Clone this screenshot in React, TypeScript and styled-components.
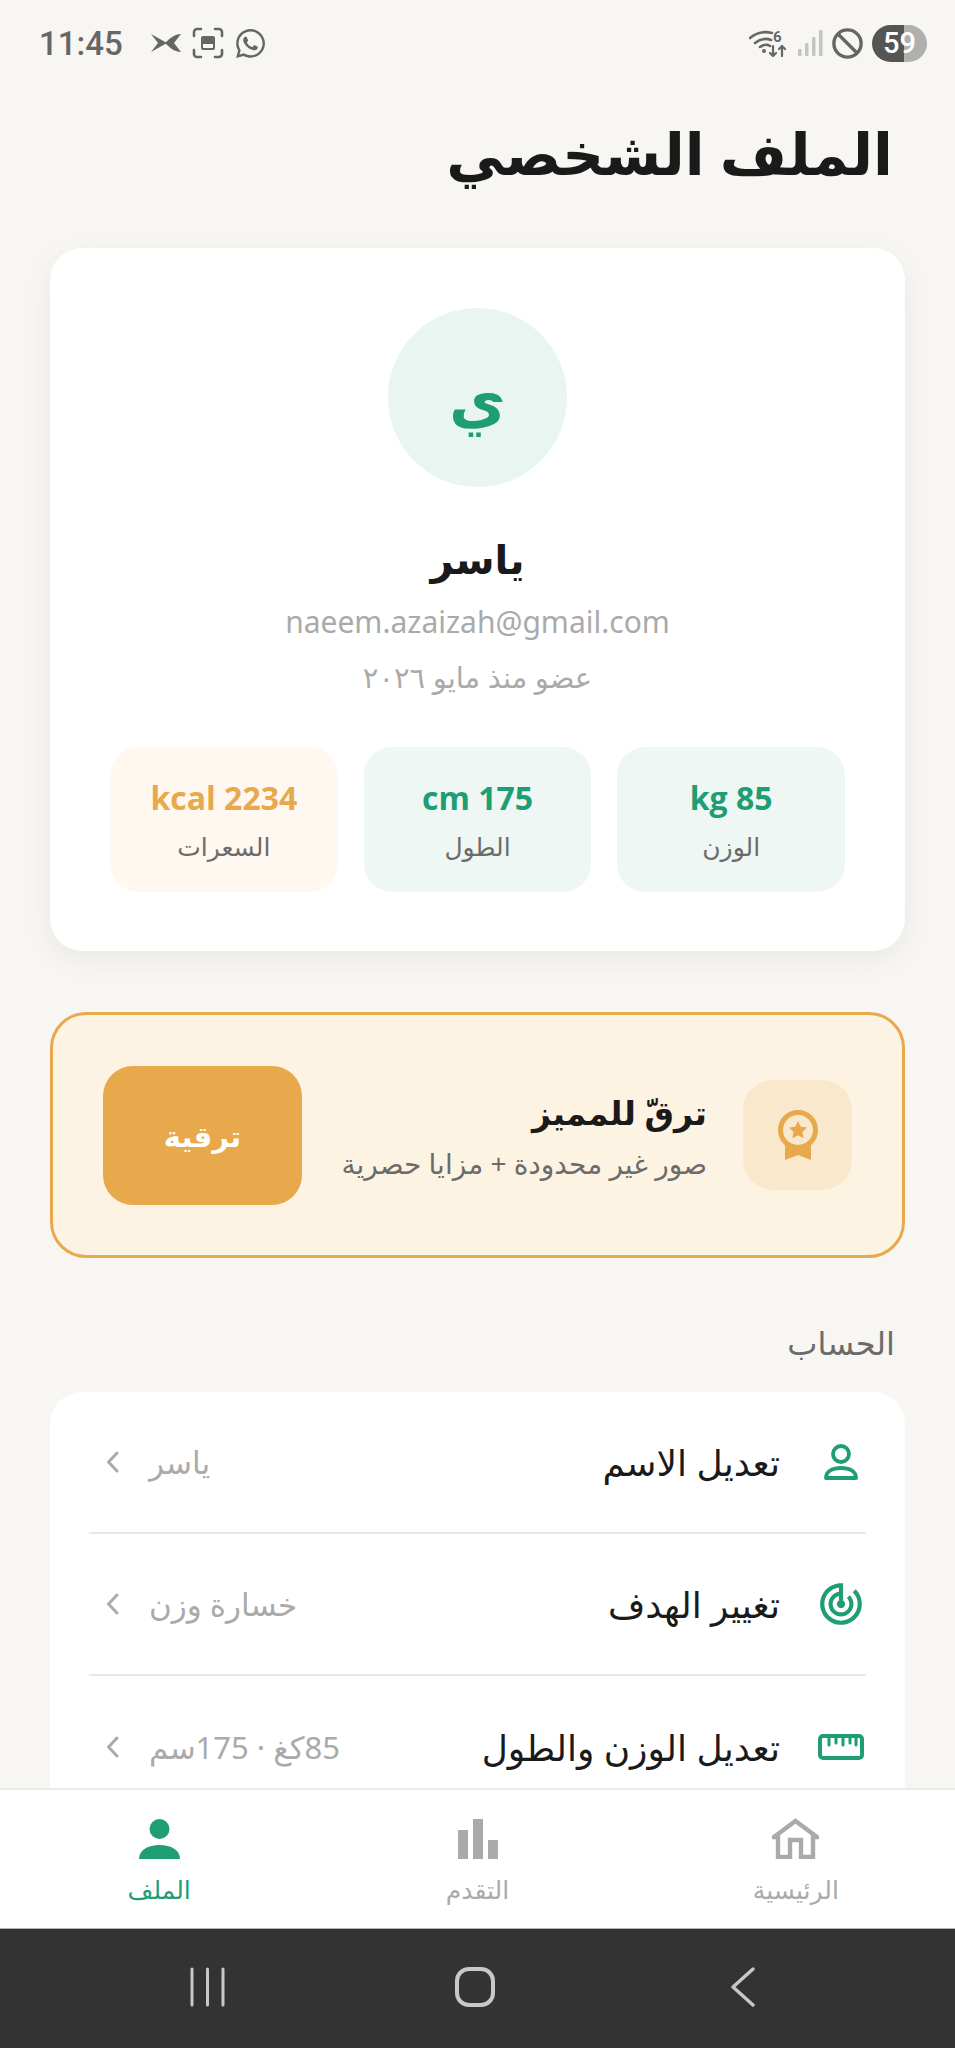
import React from 'react'
import styled, { createGlobalStyle } from 'styled-components'
import { FaWhatsapp } from 'react-icons/fa'
import { MdTrackChanges } from 'react-icons/md'

const GREEN = '#1f9d74'
const ORANGE = '#e8a84c'
const INK = '#1a1a1a'
const MUTED = '#aaaaaa'
const BODY = '#6b6b6b'

const GlobalStyle = createGlobalStyle`
  html, body {
    margin: 0;
    padding: 0;
    background: #f7f6f2;
  }
  * {
    box-sizing: border-box;
  }
  body {
    font-family: "Noto Sans", "DejaVu Sans", sans-serif;
  }
`

const Phone = styled.div`
  width: 955px;
  height: 2048px;
  display: flex;
  flex-direction: column;
  overflow: hidden;
  background: #f7f6f2;
`

const StatusBar = styled.div`
  direction: ltr;
  flex: none;
  height: 86px;
  padding: 0 28px 0 39px;
  display: flex;
  align-items: center;
  justify-content: space-between;
  color: #666;
`

const StatusGroup = styled.div`
  display: flex;
  align-items: center;
  gap: ${({ $gap }: { $gap: number }) => $gap}px;
`

const Clock = styled.span`
  font-family: Roboto, sans-serif;
  font-weight: 500;
  font-size: 33px;
  margin-right: 17px;
`

const Battery = styled.div`
  width: 55px;
  height: 37px;
  border-radius: 19px;
  background: linear-gradient(90deg, #555 58%, #b0b0ae 58%);
  color: #fff;
  font-family: Roboto, sans-serif;
  font-weight: 500;
  font-size: 29px;
  line-height: 37px;
  text-align: center;
`

const Scroll = styled.main`
  flex: 1;
  min-height: 0;
  overflow: hidden;
  padding: 0 50px;
  direction: rtl;
`

const Title = styled.h1`
  margin: 0;
  height: 162px;
  padding: 0 12px 0 0;
  font-size: 58px;
  line-height: 134px;
  font-weight: 700;
  color: ${INK};
`

const ProfileCard = styled.section`
  height: 703px;
  padding: 60px 60px 0;
  background: #fff;
  border-radius: 32px;
  box-shadow: 0 8px 28px rgba(0, 0, 0, 0.06);
  display: flex;
  flex-direction: column;
  align-items: center;
`

const Avatar = styled.div`
  width: 179px;
  height: 179px;
  border-radius: 50%;
  background: #e8f5f0;
  color: ${GREEN};
  font-size: 62px;
  font-weight: 700;
  display: flex;
  align-items: center;
  justify-content: center;
`

const Name = styled.div`
  margin-top: 42px;
  font-size: 40px;
  line-height: 60px;
  font-weight: 700;
  color: ${INK};
`

const Email = styled.div`
  margin-top: 13px;
  font-size: 30px;
  line-height: 40px;
  color: ${MUTED};
`

const Since = styled.div`
  margin-top: 15px;
  font-size: 29px;
  line-height: 40px;
  color: ${MUTED};
`

const Stats = styled.div`
  margin-top: 50px;
  width: 100%;
  display: grid;
  grid-template-columns: repeat(3, 1fr);
  gap: 26px;
`

const Stat = styled.div<{ $warm?: boolean }>`
  height: 145px;
  border-radius: 28px;
  background: ${({ $warm }) => ($warm ? '#fef8f0' : '#eef7f3')};
  display: flex;
  flex-direction: column;
  align-items: center;
  padding-top: 29px;
`

const StatValue = styled.div<{ $warm?: boolean }>`
  font-family: "Open Sans", sans-serif;
  font-size: 32px;
  line-height: 44px;
  font-weight: 700;
  color: ${({ $warm }) => ($warm ? ORANGE : GREEN)};
`

const StatLabel = styled.div`
  margin-top: 8px;
  font-size: 25px;
  line-height: 36px;
  color: ${BODY};
`

const PremiumCard = styled.section`
  margin-top: 61px;
  height: 246px;
  padding: 0 50px;
  background: #fdf3e3;
  border: 3px solid ${ORANGE};
  border-radius: 36px;
  display: flex;
  align-items: center;
`

const MedalBox = styled.div`
  flex: none;
  width: 109px;
  height: 110px;
  border-radius: 30px;
  background: #fae8cc;
  display: flex;
  align-items: center;
  justify-content: center;
`

const PremiumText = styled.div`
  margin-right: 36px;
  flex: 1;
`

const PremiumTitle = styled.div`
  font-size: 33px;
  line-height: 50px;
  font-weight: 700;
  color: ${INK};
`

const PremiumSub = styled.div`
  margin-top: 6px;
  font-size: 28px;
  line-height: 38px;
  color: ${BODY};
`

const UpgradeButton = styled.button`
  flex: none;
  width: 199px;
  height: 139px;
  border: 0;
  border-radius: 30px;
  background: ${ORANGE};
  color: #fff;
  font-family: inherit;
  font-size: 29px;
  font-weight: 700;
`

const SectionTitle = styled.h2`
  margin: 63px 0 27px;
  padding-right: 10px;
  font-size: 32px;
  line-height: 44px;
  font-weight: 400;
  color: ${BODY};
`

const MenuCard = styled.section`
  padding: 0 39px;
  background: #fff;
  border-radius: 32px;
`

const MenuRow = styled.div`
  height: 142px;
  padding: 0 0 0 17px;
  display: flex;
  align-items: center;
  border-bottom: 2px solid #e9e8e1;

  &:last-child {
    border-bottom: 0;
  }
`

const MenuIcon = styled.div`
  flex: none;
  width: 50px;
  display: flex;
  justify-content: center;
  color: ${GREEN};
`

const MenuLabel = styled.div`
  margin-right: 36px;
  font-size: 36px;
  color: ${INK};
`

const MenuValue = styled.div`
  margin-right: auto;
  font-size: 31px;
  color: ${MUTED};
`

const Chevron = styled.svg`
  flex: none;
  margin-right: 30px;
  width: 13px;
  height: 22px;
`

const TabBar = styled.nav`
  flex: none;
  height: 141px;
  direction: rtl;
  background: #fff;
  border-top: 2px solid #ebeae6;
  border-bottom: 1px solid #b5b5b5;
  display: grid;
  grid-template-columns: repeat(3, 1fr);
`

const Tab = styled.div<{ $active?: boolean }>`
  padding-top: 28px;
  display: flex;
  flex-direction: column;
  align-items: center;
  color: ${({ $active }) => ($active ? GREEN : MUTED)};
`

const TabLabel = styled.div`
  margin-top: 14px;
  font-size: 25px;
  line-height: 32px;
`

const SystemNav = styled.div`
  flex: none;
  height: 119px;
  background: #333;
  color: #c8c8c8;
  display: grid;
  grid-template-columns: 190px 35px 230px 40px 236px 24px;
  padding-top: 38px;
`

const Slot = styled.div`
  grid-column: ${({ $col }: { $col: number }) => $col};
`

function ScissorsIcon() {
  return (
    <svg width="32" height="20" viewBox="0 0 32 20" fill="currentColor">
      <path d="M1 1l16 9-16 9 7-9z" />
      <path d="M31 1c-6 0-11 4-16 9 5 5 10 9 16 9l-7-9z" />
    </svg>
  )
}

function CaptureIcon() {
  return (
    <svg width="32" height="32" viewBox="0 0 32 32" fill="none" stroke="currentColor" strokeWidth="2.6" strokeLinecap="round">
      <path d="M2 9V5a3 3 0 0 1 3-3h4M23 2h4a3 3 0 0 1 3 3v4M30 23v4a3 3 0 0 1-3 3h-4M9 30H5a3 3 0 0 1-3-3v-4" />
      <rect x="9" y="9" width="14" height="14" rx="2" fill="currentColor" stroke="none" />
      <rect x="11" y="17" width="10" height="4" fill="#f7f6f2" stroke="none" />
    </svg>
  )
}

function WifiIcon() {
  return (
    <svg width="40" height="28" viewBox="0 0 40 28" fill="none" stroke="currentColor" strokeLinecap="round">
      <path d="M1 9c6-5 14-7 22-5M6 14c5-4 11-5 16-3M11 18c3-2 7-3 10-1" strokeWidth="2.6" />
      <circle cx="15" cy="22" r="2" fill="currentColor" stroke="none" />
      <text x="24" y="13" fontFamily="Roboto, sans-serif" fontSize="15" fontWeight="700" fill="currentColor" stroke="none">6</text>
      <path d="M24 17v10M21 24l3 3 3-3M33 27V17M30 20l3-3 3 3" strokeWidth="2.2" />
    </svg>
  )
}

function SignalIcon() {
  return (
    <svg width="25" height="26" viewBox="0 0 25 26" fill="#c4c4c0">
      <rect x="0" y="19" width="3.5" height="7" rx="1" />
      <rect x="7" y="13" width="3.5" height="13" rx="1" />
      <rect x="14" y="7" width="3.5" height="19" rx="1" />
      <rect x="21" y="0" width="3.5" height="26" rx="1" />
    </svg>
  )
}

function BlockIcon() {
  return (
    <svg width="31" height="31" viewBox="0 0 31 31" fill="none" stroke="currentColor" strokeWidth="3.4">
      <circle cx="15.5" cy="15.5" r="13.6" />
      <path d="M6 6l19 19" />
    </svg>
  )
}

function MedalIcon() {
  return (
    <svg width="42" height="50" viewBox="0 0 42 50">
      <path d="M8 30v20l13-5 13 5V30z" fill={ORANGE} />
      <circle cx="21" cy="20" r="17.5" fill="#fae8cc" stroke={ORANGE} strokeWidth="5" />
      <path d="M21 11l2.8 5.8 6.2.8-4.5 4.3 1.1 6.3-5.6-3-5.6 3 1.1-6.3-4.5-4.3 6.2-.8z" fill={ORANGE} />
    </svg>
  )
}

function PersonOutlineIcon() {
  return (
    <svg width="36" height="36" viewBox="0 0 36 36" fill="none" stroke="currentColor" strokeWidth="3.8" strokeLinejoin="round">
      <circle cx="18" cy="10" r="8" />
      <path d="M3 34c0-7 7-10 15-10s15 3 15 10z" />
    </svg>
  )
}

function RulerIcon() {
  return (
    <svg width="46" height="26" viewBox="0 0 46 26" fill="none" stroke="currentColor" strokeWidth="4" strokeLinecap="round">
      <rect x="2" y="2" width="42" height="22" rx="3" />
      <path d="M11 3v8M18 3v6M25 3v8M32 3v6M38 3v8" strokeWidth="3" />
    </svg>
  )
}

function HomeIcon() {
  return (
    <svg width="47" height="41" viewBox="0 0 47 41" fill="none" stroke="currentColor" strokeWidth="4.4">
      <path d="M6 39V19H2L23.5 3 45 19h-4v20H29V22H18v17z" strokeLinejoin="miter" />
    </svg>
  )
}

function BarsIcon() {
  return (
    <svg width="40" height="41" viewBox="0 0 40 41" fill="currentColor">
      <rect x="0" y="12" width="10" height="29" />
      <rect x="15" y="1" width="10" height="40" />
      <rect x="30" y="22" width="10" height="19" />
    </svg>
  )
}

function PersonFilledIcon() {
  return (
    <svg width="41" height="41" viewBox="0 0 41 41" fill="currentColor">
      <ellipse cx="20.5" cy="11" rx="10" ry="10" />
      <path d="M0 41c0-9 9-14 20.5-14S41 32 41 41z" />
    </svg>
  )
}

const menu = [
  { label: 'تعديل الاسم', value: 'ياسر', icon: <PersonOutlineIcon /> },
  { label: 'تغيير الهدف', value: 'خسارة وزن', icon: <MdTrackChanges size={50} /> },
  { label: 'تعديل الوزن والطول', value: '85كغ · 175سم', icon: <RulerIcon /> },
]

export default function App() {
  return (
    <Phone>
      <GlobalStyle />
      <StatusBar>
        <StatusGroup $gap={10}>
          <Clock>11:45</Clock>
          <ScissorsIcon />
          <CaptureIcon />
          <FaWhatsapp size={33} />
        </StatusGroup>
        <StatusGroup $gap={9}>
          <WifiIcon />
          <SignalIcon />
          <BlockIcon />
          <Battery>59</Battery>
        </StatusGroup>
      </StatusBar>

      <Scroll>
        <Title>الملف الشخصي</Title>

        <ProfileCard>
          <Avatar>ي</Avatar>
          <Name>ياسر</Name>
          <Email>naeem.azaizah@gmail.com</Email>
          <Since>عضو منذ مايو ٢٠٢٦</Since>
          <Stats>
            <Stat>
              <StatValue>85 kg</StatValue>
              <StatLabel>الوزن</StatLabel>
            </Stat>
            <Stat>
              <StatValue>175 cm</StatValue>
              <StatLabel>الطول</StatLabel>
            </Stat>
            <Stat $warm>
              <StatValue $warm>2234 kcal</StatValue>
              <StatLabel>السعرات</StatLabel>
            </Stat>
          </Stats>
        </ProfileCard>

        <PremiumCard>
          <MedalBox>
            <MedalIcon />
          </MedalBox>
          <PremiumText>
            <PremiumTitle>ترقّ للمميز</PremiumTitle>
            <PremiumSub>صور غير محدودة + مزايا حصرية</PremiumSub>
          </PremiumText>
          <UpgradeButton>ترقية</UpgradeButton>
        </PremiumCard>

        <SectionTitle>الحساب</SectionTitle>

        <MenuCard>
          {menu.map((item) => (
            <MenuRow key={item.label}>
              <MenuIcon>{item.icon}</MenuIcon>
              <MenuLabel>{item.label}</MenuLabel>
              <MenuValue>{item.value}</MenuValue>
              <Chevron viewBox="0 0 13 22" fill="none" stroke="#aaaaaa" strokeWidth="3" strokeLinecap="round" strokeLinejoin="round">
                <path d="M11 2L2.5 11 11 20" />
              </Chevron>
            </MenuRow>
          ))}
        </MenuCard>
      </Scroll>

      <TabBar>
        <Tab>
          <HomeIcon />
          <TabLabel>الرئيسية</TabLabel>
        </Tab>
        <Tab>
          <BarsIcon />
          <TabLabel>التقدم</TabLabel>
        </Tab>
        <Tab $active>
          <PersonFilledIcon />
          <TabLabel>الملف</TabLabel>
        </Tab>
      </TabBar>

      <SystemNav>
        <Slot $col={2}>
          <svg width="35" height="40" viewBox="0 0 35 40" stroke="currentColor" strokeWidth="3" strokeLinecap="round">
            <path d="M2 2v36M17.5 2v36M33 2v36" />
          </svg>
        </Slot>
        <Slot $col={4}>
          <svg width="40" height="40" viewBox="0 0 40 40" fill="none" stroke="currentColor" strokeWidth="4">
            <rect x="2" y="2" width="36" height="36" rx="12" />
          </svg>
        </Slot>
        <Slot $col={6}>
          <svg width="24" height="40" viewBox="0 0 24 40" fill="none" stroke="currentColor" strokeWidth="3.4" strokeLinecap="round" strokeLinejoin="round">
            <path d="M22 2L2 20l20 18" />
          </svg>
        </Slot>
      </SystemNav>
    </Phone>
  )
}
